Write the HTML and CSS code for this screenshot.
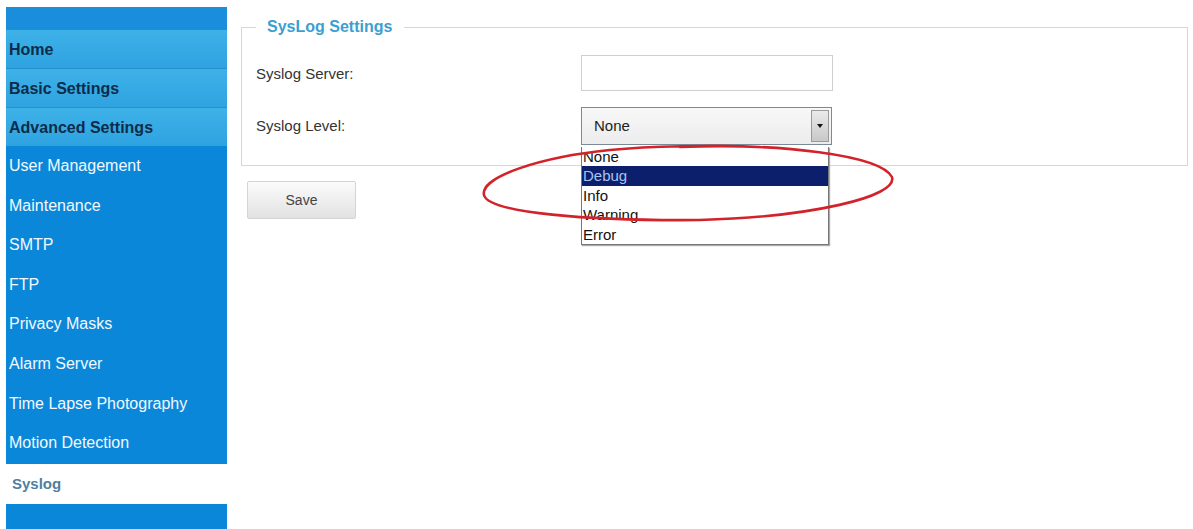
FILE: index.html
```html
<!DOCTYPE html>
<html lang="en">
<head>
  <meta charset="UTF-8">
  <meta name="viewport" content="width=device-width, initial-scale=1.0">
  <link rel="stylesheet" href="styles.css">
  <title>SysLog Settings</title>
</head>
<body>
  <div class="page">
    <div class="sidebar">
      <div class="menu-top"></div>
      <div class="menu-main">Home</div>
      <div class="menu-main">Basic Settings</div>
      <div class="menu-main">Advanced Settings</div>
      <div class="menu-sub">
        <div class="sub-item">User Management</div>
        <div class="sub-item">Maintenance</div>
        <div class="sub-item">SMTP</div>
        <div class="sub-item">FTP</div>
        <div class="sub-item">Privacy Masks</div>
        <div class="sub-item">Alarm Server</div>
        <div class="sub-item">Time Lapse Photography</div>
        <div class="sub-item">Motion Detection</div>
      </div>
      <div class="sub-item active">Syslog</div>
      <div class="menu-bottom"></div>
    </div>

    <div class="content">
      <fieldset class="settings">
        <legend>SysLog Settings</legend>
        <div class="form-row">
          <label for="server">Syslog Server:</label>
          <input type="text" id="server" class="text-input">
        </div>
        <div class="form-row level-row">
          <label>Syslog Level:</label>
          <div class="select-wrap">
            <div class="select-box">
              <span>None</span>
              <span class="select-arrow"></span>
            </div>
            <div class="select-list">
              <div class="option">None</div>
              <div class="option selected">Debug</div>
              <div class="option">Info</div>
              <div class="option">Warning</div>
              <div class="option">Error</div>
            </div>
          </div>
        </div>
      </fieldset>
      <button class="save-btn">Save</button>

      <!-- red marker circle drawn on top of the screenshot -->
      <svg class="marker" width="420" height="84" viewBox="0 0 420 84">
        <path d="M200 6 C300 2 400 14 412 36 C418 56 330 76 220 79 C110 80 8 72 4 54 C0 36 60 16 130 9 C170 5 230 4 280 6"
              fill="none" stroke="#d2232a" stroke-width="2.6" stroke-linecap="round"/>
      </svg>
    </div>
  </div>
</body>
</html>
```

FILE: styles.css
```css
body {
  margin: 0;
  padding: 0;
  background: #fff;
  font-family: "Liberation Sans", Arial, sans-serif;
}

.page {
  display: flex;
  align-items: flex-start;
  padding: 7px 0 0 6px;
  height: 522px;
  overflow: hidden;
}

.sidebar {
  width: 221px;
  flex-shrink: 0;
}

.menu-top {
  height: 22px;
  background: #1b8edb;
}

.menu-main {
  height: 39px;
  line-height: 39px;
  padding-left: 3px;
  font-size: 16px;
  font-weight: bold;
  color: #0d2c4a;
  background: linear-gradient(#3eb1e8, #2ea3e0);
  border-top: 1px solid #2690cf;
  box-sizing: border-box;
}

.menu-sub {
  background: #0b87d9;
  padding-bottom: 1px;
}

.sub-item {
  height: 39.6px;
  line-height: 39px;
  padding-left: 3px;
  font-size: 16px;
  color: #f2f9ff;
}

.sub-item.active {
  background: #fff;
  color: #4f7f9e;
  font-weight: bold;
  font-size: 15px;
  padding-left: 6px;
  height: 40px;
}

.menu-bottom {
  height: 30px;
  background: #0b87d9;
}

.content {
  position: relative;
  flex: 1;
  padding-left: 14px;
  padding-right: 5px;
}

.settings {
  margin: 11px 0 0 0;
  padding: 11px 14px 13px 14px;
  border: 1px solid #d6d6d6;
  min-width: 0;
}

.settings legend {
  margin-left: 0;
  padding: 0 12px 0 11px;
  font-size: 16px;
  font-weight: bold;
  color: #3b9fd0;
}

.form-row {
  display: flex;
  align-items: center;
  height: 52px;
}

.level-row {
  height: 53px;
}

.form-row label {
  width: 325px;
  font-size: 15px;
  color: #333;
}

.text-input {
  width: 252px;
  height: 36px;
  box-sizing: border-box;
  border: 1px solid #cfcfcf;
  margin: 0;
}

.select-wrap {
  position: relative;
}

.select-box {
  display: flex;
  justify-content: space-between;
  align-items: center;
  width: 251px;
  height: 38px;
  box-sizing: border-box;
  border: 1px solid #7b8a96;
  background: linear-gradient(#f8f8f8, #ececec);
  padding: 0 2px 0 12px;
  font-size: 15px;
  color: #222;
}

.select-arrow {
  position: relative;
  width: 18px;
  height: 32px;
  background: linear-gradient(#eaeaea, #c8c8c8);
  border: 1px solid #9a9a9a;
  box-sizing: border-box;
}

.select-arrow::after {
  content: "";
  position: absolute;
  left: 5px;
  top: 13px;
  border-left: 3px solid transparent;
  border-right: 3px solid transparent;
  border-top: 4px solid #111;
}

.select-list {
  position: absolute;
  left: 0;
  top: 40px;
  width: 246px;
  background: #fff;
  border: 1px solid #777;
  border-top: none;
  box-shadow: 1px 1px 1px #aaa;
  z-index: 2;
}

.option {
  height: 19.6px;
  line-height: 20px;
  font-size: 15px;
  color: #111;
  padding-left: 1px;
}

.option.selected {
  background: #0c1f6d;
  color: #a8c4f0;
}

.save-btn {
  display: block;
  margin: 15px 0 0 6px;
  width: 109px;
  height: 38px;
  border: 1px solid #d4d4d4;
  border-radius: 2px;
  background: linear-gradient(#fbfbfb, #e2e2e2);
  font-family: "Liberation Sans", Arial, sans-serif;
  font-size: 14px;
  color: #444;
}

.marker {
  position: absolute;
  left: 253px;
  top: 134px;
  z-index: 3;
}
```
